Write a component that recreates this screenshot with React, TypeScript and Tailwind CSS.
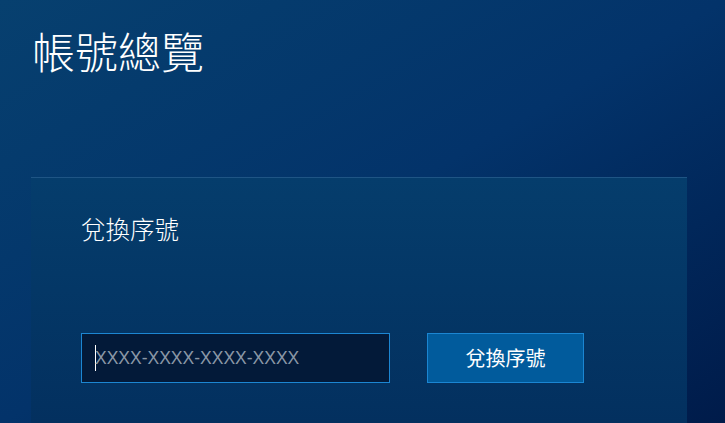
const font = {
  fontFamily: '"Noto Sans CJK TC", "Noto Sans CJK SC", sans-serif',
};

const App = () => {
  return (
    <div
      className="w-[725px] h-[423px] overflow-hidden bg-gradient-to-br from-[#07406f] via-[#03336a] to-[#001b4a]"
      style={font}
    >
      <div className="pl-[32px] pt-[22px]">
        <h1 className="text-[43px] leading-[56px] font-light text-white">帳號總覽</h1>
      </div>

      <section className="ml-[31px] mt-[99px] w-[656px] h-[246px] border-t border-[#1f5585] bg-gradient-to-b from-[#053d6c] to-[#03305f] pl-[50px] pt-[35px]">
        <h2 className="text-[24.5px] leading-[32px] font-light text-white">兌換序號</h2>

        <div className="flex items-center gap-[37px] mt-[88px]">
          <div className="relative w-[309px] h-[50px] border border-[#1c86d2] bg-[#031a39] flex items-center pl-[13px]">
            <span className="w-px h-[26px] bg-white" />
            <input
              className="absolute inset-0 pl-[13px] bg-transparent outline-none text-[17.5px] text-white placeholder:text-[#8a97a6]"
              style={{ fontFamily: '"Liberation Sans", Arial, sans-serif' }}
              placeholder="XXXX-XXXX-XXXX-XXXX"
            />
          </div>
          <button className="w-[157px] h-[50px] border border-[#1b86d2] bg-[#015b9c] text-white text-[20px]">
            兌換序號
          </button>
        </div>
      </section>
    </div>
  );
};

export default App;
